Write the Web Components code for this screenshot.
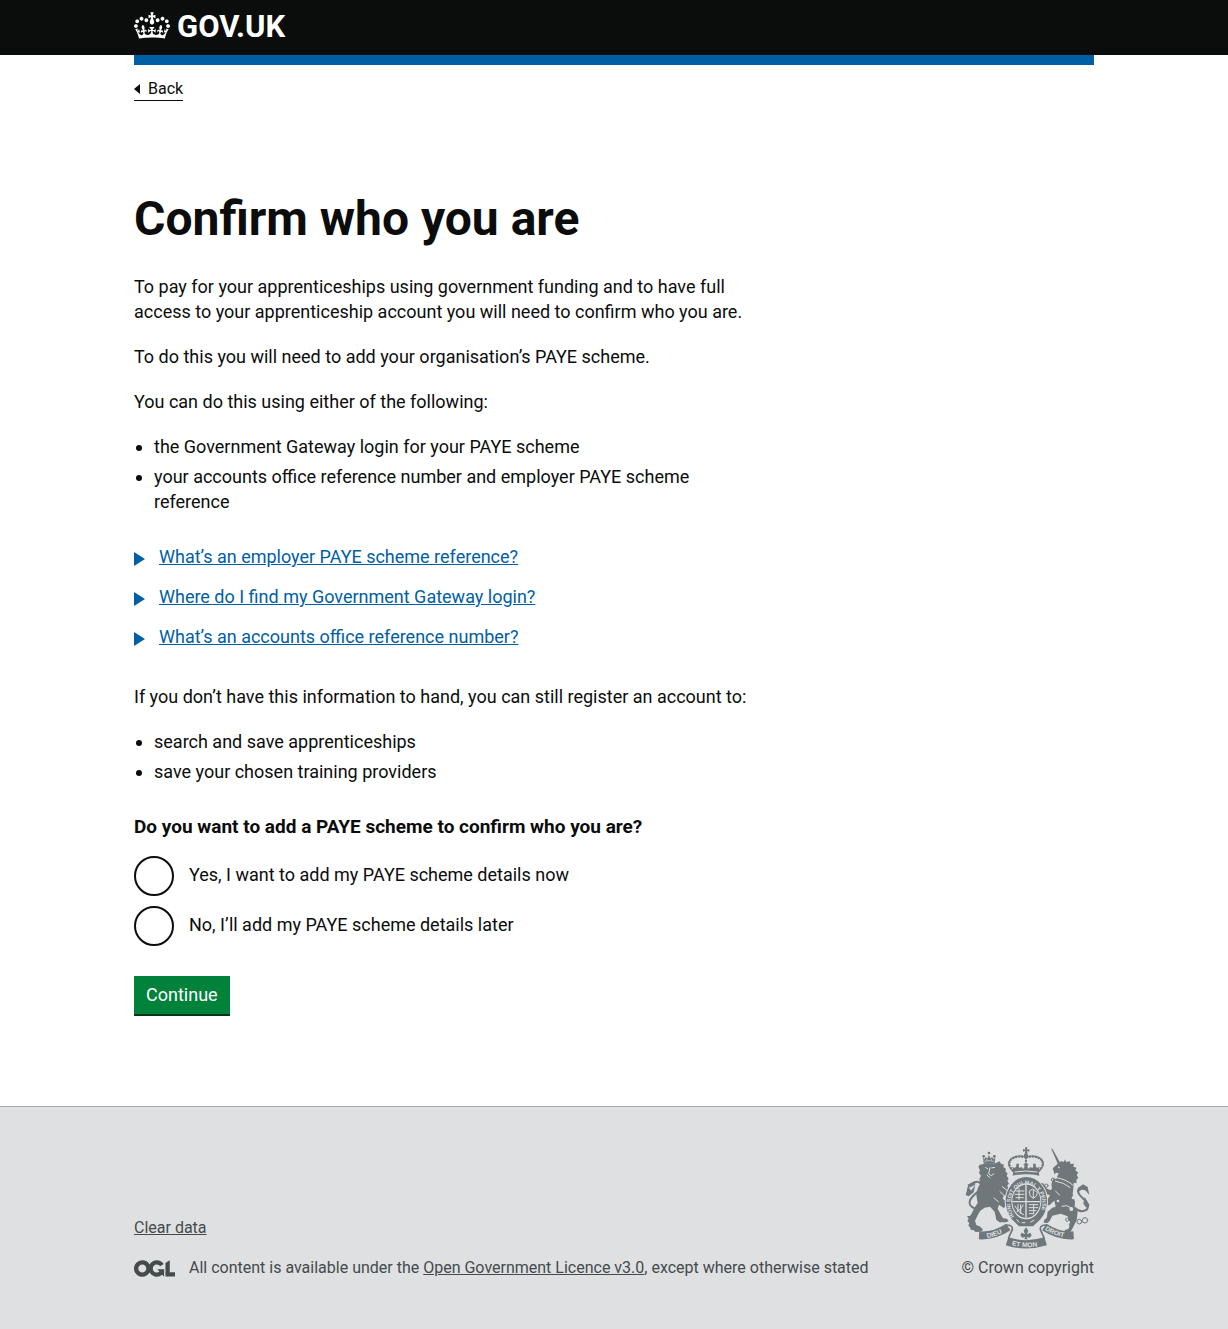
<!DOCTYPE html>
<html lang="en">
<head>
<meta charset="utf-8">
<meta name="viewport" content="width=device-width, initial-scale=1">
<title>Confirm who you are</title>
<style>
  html { background: #dee0e2; }
  body {
    margin: 0;
    min-height: 100vh;
    display: flex;
    flex-direction: column;
    background: #fff;
    color: #0b0c0c;
    font: 18px/25px Roboto, "Liberation Sans", Arial, sans-serif;
  }
  p { margin: 0 0 20px; }
</style>
</head>
<body>
<govuk-header></govuk-header>
<govuk-main>
  <govuk-back-link slot="before" href="#back">Back</govuk-back-link>
  <govuk-heading>Confirm who you are</govuk-heading>
  <p>To pay for your apprenticeships using government funding and to have full access to your apprenticeship account you will need to confirm who you are.</p>
  <p>To do this you will need to add your organisation’s PAYE scheme.</p>
  <p>You can do this using either of the following:</p>
  <govuk-list items="the Government Gateway login for your PAYE scheme|your accounts office reference number and employer PAYE scheme reference"></govuk-list>
  <govuk-details-group>
    <govuk-details summary="What’s an employer PAYE scheme reference?"></govuk-details>
    <govuk-details summary="Where do I find my Government Gateway login?"></govuk-details>
    <govuk-details summary="What’s an accounts office reference number?"></govuk-details>
  </govuk-details-group>
  <p>If you don’t have this information to hand, you can still register an account to:</p>
  <govuk-list items="search and save apprenticeships|save your chosen training providers"></govuk-list>
  <govuk-radio-form></govuk-radio-form>
</govuk-main>
<govuk-footer></govuk-footer>

<script>
const define = (name, html, setup) => {
  const template = document.createElement('template');
  template.innerHTML = html;
  customElements.define(name, class extends HTMLElement {
    constructor() {
      super();
      this.attachShadow({ mode: 'open' }).append(template.content.cloneNode(true));
    }
    connectedCallback() { if (setup) setup(this, this.shadowRoot); }
  });
};

define('govuk-width', `
<style>
  :host { display: block; }
  div { max-width: 960px; margin: 0 auto; }
  @media (max-width: 1020px) { div { margin: 0 30px; } }
</style>
<div><slot></slot></div>`);

define('govuk-header', `
<style>
  :host { display: block; }
  header { background: #0b0c0c; }
  .bar { height: 10px; background: #005ea5; }
  a {
    display: inline-flex; align-items: flex-start; gap: 7px; height: 55px; box-sizing: border-box;
    padding-top: 12px; color: #fff; text-decoration: none; font-size: 31px; line-height: 30px; font-weight: 700;
  }
  svg { width: 36px; height: 27px; fill: currentColor; }
</style>
<header><govuk-width><a href="#home">
  <svg viewBox="0 0 132 97" aria-hidden="true"><path d="M25 30.2c3.5 1.5 7.7-.2 9.1-3.7 1.5-3.6-.2-7.8-3.9-9.2-3.6-1.4-7.6.3-9.1 3.9-1.4 3.5.3 7.5 3.9 9zM9 39.5c3.6 1.5 7.8-.2 9.2-3.7 1.5-3.6-.2-7.8-3.9-9.1-3.6-1.5-7.6.2-9.1 3.8-1.4 3.5.3 7.5 3.8 9zM4.4 57.2c3.5 1.5 7.7-.2 9.1-3.8 1.5-3.6-.2-7.7-3.9-9.1-3.5-1.5-7.6.3-9.1 3.8-1.4 3.5.3 7.6 3.9 9.1zm38.3-21.4c3.5 1.5 7.7-.2 9.1-3.8 1.5-3.6-.2-7.7-3.9-9.1-3.6-1.5-7.6.3-9.1 3.8-1.3 3.6.4 7.7 3.9 9.1zm64.4-5.6c-3.6 1.5-7.8-.2-9.1-3.7-1.5-3.6.2-7.8 3.8-9.2 3.6-1.4 7.7.3 9.2 3.9 1.3 3.5-.4 7.5-3.9 9zm15.9 9.3c-3.6 1.5-7.7-.2-9.1-3.7-1.5-3.6.2-7.8 3.7-9.1 3.6-1.5 7.7.2 9.2 3.8 1.5 3.5-.3 7.5-3.8 9zm4.7 17.7c-3.6 1.5-7.8-.2-9.2-3.8-1.5-3.6.2-7.7 3.9-9.1 3.6-1.5 7.7.3 9.2 3.8 1.3 3.5-.4 7.6-3.9 9.1zM89.3 35.8c-3.6 1.5-7.8-.2-9.2-3.8-1.4-3.6.2-7.7 3.9-9.1 3.6-1.5 7.7.3 9.2 3.8 1.4 3.6-.3 7.7-3.9 9.1zM69.7 17.7l8.9 4.7V9.3l-8.9 2.8c-.2-.3-.5-.6-.9-.9L72.4 0H59.6l3.5 11.2c-.3.3-.6.5-.9.9l-8.8-2.8v13.1l8.8-4.7c.3.3.6.7.9.9l-5 15.4v.1c-.2.8-.4 1.6-.4 2.4 0 4.1 3.1 7.5 7 8.1h.2c.3 0 .7.1 1 .1.4 0 .7 0 1-.1h.2c4-.6 7.1-4.1 7.1-8.1 0-.8-.1-1.7-.4-2.4V34l-5.1-15.4c.4-.2.7-.6 1-.9zM66 92.8c16.9 0 32.8 1.1 47.1 3.2 4-16.9 8.9-26.7 14-33.5l-9.6-3.4c1 4.9 1.1 7.2 0 10.2-1.5-1.4-3-4.3-4.2-8.7L108.6 76c2.8-2 5-3.2 7.5-3.3-4.4 9.4-10 11.9-13.6 11.2-4.3-.8-6.3-4.6-5.6-7.9 1-4.7 5.7-5.9 8-.5 4.3-8.7-3-11.4-7.6-8.8 7.1-7.2 7.9-13.5 2.1-21.1-8 6.1-8.1 12.3-4.5 20.8-4.7-5.4-12.1-2.5-9.5 6.2 3.4-5.2 7.9-2 7.2 3.1-.6 4.3-6.4 7.8-13.5 7.2-10.3-.9-10.9-8-11.2-13.8 2.5-.5 7.1 1.8 11 7.3L80.2 60c-4.1 4.4-8 5.3-12.3 5.4 1.4-4.4 8-11.6 8-11.6H55.5s6.4 7.2 7.9 11.6c-4.2-.1-8-1-12.3-5.4l1.4 16.4c3.9-5.5 8.5-7.7 10.9-7.3-.3 5.8-.9 12.8-11.1 13.8-7.2.6-12.9-2.9-13.5-7.2-.7-5 3.8-8.3 7.1-3.1 2.7-8.7-4.6-11.6-9.4-6.2 3.7-8.5 3.6-14.7-4.6-20.8-5.8 7.6-5 13.9 2.2 21.1-4.7-2.6-11.9.1-7.7 8.8 2.3-5.5 7.1-4.2 8.1.5.7 3.3-1.3 7.1-5.7 7.9-3.5.7-9-1.8-13.5-11.2 2.5.1 4.7 1.3 7.5 3.3l-4.7-15.4c-1.2 4.4-2.7 7.2-4.3 8.7-1.1-3-.9-5.3 0-10.2l-9.5 3.4c5 6.9 9.9 16.7 14 33.5 14.8-2.1 30.8-3.2 47.7-3.2z"/></svg>
  <span>GOV.UK</span></a></govuk-width></header>
<govuk-width><div class="bar"></div></govuk-width>`);

define('govuk-main', `
<style>
  :host { display: block; flex: 1 0 auto; }
  main { max-width: 630px; padding: 93px 0 90px; }
</style>
<govuk-width><slot name="before"></slot><main><slot></slot></main></govuk-width>`);

define('govuk-back-link', `
<style>
  :host { display: flex; padding-top: 14px; }
  a {
    display: inline-flex; align-items: center; gap: 8px; color: #0b0c0c; text-decoration: none;
    font-size: 16px; line-height: 20px; border-bottom: 1px solid #0b0c0c; padding-bottom: 1px;
  }
  a::before { content: ""; border: 5px solid transparent; border-right: 6px solid #0b0c0c; border-left: 0; }
</style>
<a><slot></slot></a>`, (el, root) => { root.querySelector('a').href = el.getAttribute('href'); });

define('govuk-heading', `
<style>
  :host { display: block; }
  h1 { margin: 0 0 30px; font-size: 48px; line-height: 50px; font-weight: 700; }
</style>
<h1><slot></slot></h1>`);

define('govuk-list', `
<style>
  :host { display: block; margin-bottom: 30px; }
  ul { margin: 0; padding-left: 20px; display: flex; flex-direction: column; gap: 5px; }
</style>
<ul></ul>`, (el, root) => {
  root.querySelector('ul').replaceChildren(...el.getAttribute('items').split('|').map(text => {
    const li = document.createElement('li');
    li.textContent = text;
    return li;
  }));
});

define('govuk-details-group', `
<style>:host { display: flex; flex-direction: column; gap: 15px; margin-bottom: 35px; }</style>
<slot></slot>`);

define('govuk-details', `
<style>
  :host { display: block; }
  summary { display: flex; width: fit-content; align-items: center; gap: 14px; color: #005ea5; cursor: pointer; list-style: none; }
  summary::before { content: ""; margin-top: 4px; border: 7px solid transparent; border-left: 11px solid #005ea5; border-right: 0; }
  details[open] summary::before { transform: rotate(90deg); }
  span { text-decoration: underline; }
</style>
<details><summary><span></span></summary><slot></slot></details>`, (el, root) => {
  root.querySelector('span').textContent = el.getAttribute('summary');
});

define('govuk-radio-form', `
<style>
  :host { display: block; }
  fieldset { margin: 0; padding: 0; border: 0; min-width: 0; }
  legend { padding: 0; font-size: 19px; font-weight: 700; }
  .options { display: flex; flex-direction: column; gap: 10px; margin: 17px 0 30px; }
  label { display: flex; align-items: center; gap: 15px; cursor: pointer; }
  label span { padding-bottom: 3px; }
  input {
    appearance: none; flex: none; width: 40px; height: 40px; margin: 0; box-sizing: border-box;
    border: 2px solid #0b0c0c; border-radius: 50%; background: #fff;
  }
  input:checked { background: radial-gradient(#0b0c0c 10px, #fff 11px); }
  button {
    display: block; margin: 0 0 2px; padding: 6px 12px 7px; border: 0; background: #00823b; color: #fff;
    box-shadow: 0 2px 0 #003618; font: inherit; cursor: pointer;
  }
</style>
<form>
  <fieldset>
    <legend>Do you want to add a PAYE scheme to confirm who you are?</legend>
    <div class="options">
      <label><input type="radio" name="paye" value="now"><span>Yes, I want to add my PAYE scheme details now</span></label>
      <label><input type="radio" name="paye" value="later"><span>No, I’ll add my PAYE scheme details later</span></label>
    </div>
  </fieldset>
  <button type="submit">Continue</button>
</form>`);

define('royal-arms', `
<style>
  :host { display: block; width: 125px; height: 102px; }
  svg { display: block; width: 100%; height: 100%; fill: #6f777b; overflow: visible; }
  .line { fill: none; stroke: #6f777b; stroke-linecap: round; stroke-linejoin: round; }
  .band { fill: none; stroke: #6f777b; }
  .cut { fill: none; stroke: #dee0e2; }
  .gap { fill: #dee0e2; }
  text { fill: #dee0e2; font: 700 20px "Liberation Sans", Arial, sans-serif; }
  .motto { font-size: 16px; }
</style>
<svg viewBox="48 36 375 306" aria-hidden="true">
  <!-- crown -->
  <path d="M228 37h7l-1 7 7-2v8l-7-2 2 8h-9l2-8-7 2v-8l7 2z"/>
  <circle cx="231" cy="61" r="6"/>
  <path class="line" stroke-width="7" stroke-dasharray="1 8" d="M229 67c-24-7-50 2-48 21 1 10 9 17 15 23M233 67c24-7 50 2 48 21-1 10-9 17-15 23M231 68v26"/>
  <path class="line" stroke-width="3" d="M229 65c-24-7-52 2-50 22 1 10 9 18 14 24M233 65c24-7 52 2 50 22-1 10-9 18-14 24"/>
  <path d="M193 108l-3-13 8 4 7-11 7 11 6-3 5 6 4-8-4-6h16l-4 6 4 8 5-6 6 3 7-11 7 11 8-4-3 13 2 14q-40-8-80 0zM202 86h8v6h-8zM252 86h8v6h-8zM227 84h8v10h-8z"/>
  <path class="cut" stroke-width="3" d="M197 111q34-6 68 0"/>
  <!-- lion -->
  <path d="M102 66l4 7 5-8 4 6 5-11 5 11 4-6 5 8 5-7-2 19-33 1z"/>
  <circle cx="120" cy="54" r="4"/><circle cx="104" cy="64" r="4"/><circle cx="136" cy="64" r="4"/>
  <path class="cut" stroke-width="2" d="M106 79q14-4 29 0M113 72v4M127 72v4"/>
  <path d="M101 88l10-3 28 0 13-6 4 7 9 3-2 7 8 6-2 6 7 8-3 6 6 9-4 6 5 9-5 5 2 8 13 10 8 4-4 7-10-1-4 8-8-6-8 2-3 8 12 9 8 9-3 8-8-3-6 5-14-10-4 12 9 17 7 12 12 1 5 8-9 3-18 0-10-7-5-25-14-15-16 3-13 9-8 14-8 16 4 13 12 5 8 9-7 6-15 1-8-7-6 2-3-9-5-5 3-8-6-6 4-7-5-7 10-2 6-10 6-13 10-15-4-24 4-20 8-15-3-12 5-11-6-8 3-9-5-9 4-7z"/>
  <path class="cut" stroke-width="3" d="M109 97l8 5M123 97l-4 20 8 5 8-6M127 99l11-2M113 119l11 10M134 188l15 13M159 154l15 12M152 169l18 17"/>
  <path class="line" stroke-width="6" d="M96 218c-20 8-39-5-33-22 6-17 31-26 34-42 1-12-11-16-20-12-16 4-22 19-21 33"/>
  <path d="M50 180l8-26 8 13 13-18-5 23-15 12zM55 149l25-11-2 11-13 8z"/>
  <!-- unicorn -->
  <path d="M306 40l5 3 23 41-7 4z"/>
  <path d="M314 109l-3-9 11-10 8-9 9-2 5 2 4-8 3 8 12-2 1 8 11-1-2 9 10 3-4 8 9 7-5 6 5 10-6 5 1 11-8-2-4 12-15-6-26-7-9-9 8-18-8-2-5 5z"/>
  <path d="M317 131l42 9 15 12-3 25 7 23-1 18 9 11-3 27-15 29-7 9-16-1 3-8 11-4 5-17-8-20-21-8-25 6-8 16-7 6-11-1 2-9 7-5 3-19 14-12 10-3-4-18-15 14-14-1-15-8 3-8 12 1 6 2 10-16-11-4-7-13-8-7-6 7-12-3 3-13 11-5 10 2 11 16 12 5 3-8-2-11 6-15z"/>
  <path class="cut" stroke-width="3" d="M321 128q29 4 50 22M318 138q26 4 46 20M327 96l6 3M319 168l14 13M338 214q16-6 27 4"/>
  <path class="line" stroke-width="6" d="M378 219c14 15 39 11 39-5 0-18-27-27-30-45 0-12 13-14 22-8"/>
  <path d="M388 158l14-10 14 8 5 24-12-14-12-2-9 8zM407 186l15 25-10 7-9-12z"/>
  <g class="line" stroke-width="3"><circle cx="312" cy="134" r="5"/><circle cx="292" cy="152" r="5"/><circle cx="355" cy="254" r="5"/><circle cx="366" cy="269" r="5"/><circle cx="391" cy="260" r="7"/><circle cx="408" cy="256" r="8"/></g>
  <g class="gap"><circle cx="373" cy="188" r="5"/><circle cx="367" cy="222" r="6"/><circle cx="327" cy="198" r="4"/></g>
  <!-- garter and shield -->
  <ellipse cx="232" cy="199" rx="65" ry="75" class="gap"/>
  <ellipse cx="232" cy="199" rx="62" ry="73"/>
  <ellipse cx="232" cy="199" rx="45" ry="54" class="gap"/>
  <ellipse cx="232" cy="199" rx="42" ry="50"/>
  <path class="cut" stroke-width="4" d="M231 150v98M190 200h84"/>
  <path class="cut" stroke-width="3" d="M200 168h26M197 178h29M200 188h24M210 160v34M207 208v22M215 208v29M223 209q-4 14-20 21M197 212q12 22 28 28M241 168l10-6 14 10-2 10-10 8-10-8zM253 164v26M240 209h28M239 218h29M240 227h22M240 236h14M254 208v30"/>
  <path id="garter" fill="none" d="M197 244A48 57 0 1 1 267 244"/>
  <text class="motto"><textPath href="#garter">HONI SOIT QUI MAL Y PENSE</textPath></text>
  <path d="M186 250l13-7 20 13 24 1 24-13 8 8-23 22h-42z"/>
  <path class="cut" stroke-width="3" d="M203 253l7 9M218 263h11M244 262l12-7"/>
  <!-- fleur and ribbons -->
  <path d="M231 277l7 10-4 11 10-5 4 8-6 7-9-2 3 7h-10l3-7-9 2-6-7 4-8 10 5-4-11z"/>
  <path class="line" stroke-width="5" d="M172 270q20 0 18 14l-11 24M292 270q-20 0-18 14l11 24"/>
  <g class="band">
    <path stroke-width="24" d="M90 301Q136 304 178 276M374 301Q328 304 286 276"/>
    <path stroke-width="25" d="M174 319Q231 337 290 319"/>
  </g>
  <path id="dieu" fill="none" d="M115 309Q144 305 176 285"/>
  <path id="droit" fill="none" d="M287 284Q322 307 366 309"/>
  <path id="mon" fill="none" d="M188 331Q231 342 280 331"/>
  <text><textPath href="#dieu">DIEU</textPath></text>
  <text><textPath href="#droit">DROIT</textPath></text>
  <text><textPath href="#mon">ET MON</textPath></text>
</svg>`);

define('govuk-footer', `
<style>
  :host { display: block; background: #dee0e2; border-top: 1px solid #a1acb2; color: #454a4c; font-size: 16px; line-height: 20px; }
  footer { display: flex; justify-content: space-between; align-items: flex-end; gap: 30px; padding: 40px 0 51px; }
  .meta { display: flex; flex-direction: column; gap: 20px; align-items: flex-start; }
  .licence { display: flex; align-items: center; gap: 14px; }
  .licence svg { flex: none; width: 41px; height: 17px; fill: #454a4c; }
  a { color: inherit; }
  .copyright { display: flex; flex-direction: column; align-items: center; gap: 9px; white-space: nowrap; }
</style>
<govuk-width><footer>
  <div class="meta">
    <a href="#clear">Clear data</a>
    <div class="licence">
      <svg viewBox="0 0 483.2 195.7" aria-hidden="true"><path d="M421.5 142.8V.1l-50.7 32.3v161.1h112.4v-50.7zm-122.3-9.6A47.12 47.12 0 0 1 221 97.8c0-26 21.1-47.1 47.1-47.1 16.7 0 31.4 8.7 39.7 21.8l42.7-27.2A97.63 97.63 0 0 0 268.1 0c-36.5 0-68.3 20.1-85.1 49.7A98 98 0 0 0 97.8 0C43.9 0 0 43.9 0 97.8s43.9 97.8 97.8 97.8c36.5 0 68.3-20.1 85.1-49.7a97.76 97.76 0 0 0 149.6 25.4l19.4 22.2h3v-87.8h-80l24.3 27.5zM97.8 145c-26 0-47.1-21.1-47.1-47.1s21.1-47.1 47.1-47.1 47.1 21.1 47.1 47.1S123.8 145 97.8 145"/></svg>
      <span>All content is available under the <a href="#licence">Open Government Licence v3.0</a>, except where otherwise stated</span>
    </div>
  </div>
  <div class="copyright"><royal-arms></royal-arms><span>© Crown copyright</span></div>
</footer></govuk-width>`);
</script>
</body>
</html>
